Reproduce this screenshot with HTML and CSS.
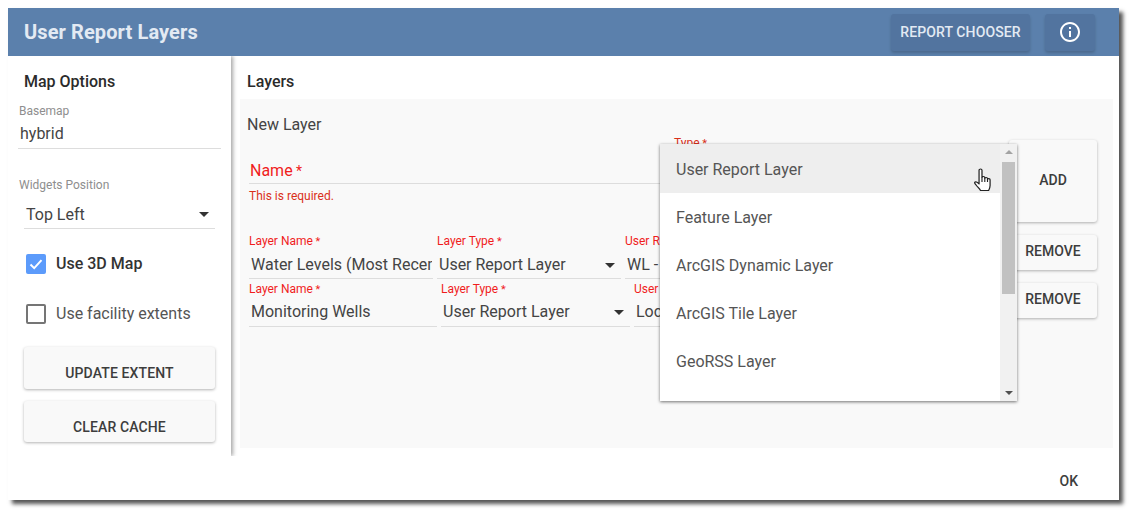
FILE: index.html
```html
<!DOCTYPE html>
<html lang="en">
<head>
<meta charset="utf-8">
<title>User Report Layers</title>
<link rel="stylesheet" href="styles.css">
</head>
<body>
<div class="dialog">
  <header class="topbar">
    <h1 class="title">User Report Layers</h1>
    <button class="top-btn chooser">REPORT CHOOSER</button>
    <button class="top-btn info" aria-label="Info">
      <svg width="24" height="24" viewBox="0 0 24 24"><path fill="#fff" d="M11 7h2v2h-2zm0 4h2v6h-2zm1-9C6.480 2 2 6.480 2 12s4.480 10 10 10 10-4.480 10-10S17.520 2 12 2zm0 18c-4.410 0-8-3.590-8-8s3.590-8 8-8 8 3.590 8 8-3.590 8-8 8z"/></svg>
    </button>
  </header>
  <div class="content">
    <aside class="sidebar">
      <h2 class="heading side-heading">Map Options</h2>
      <div class="side-field basemap">
        <div class="label-grey">Basemap</div>
        <div class="side-value">hybrid</div>
      </div>
      <div class="label-grey widgets-label">Widgets Position</div>
      <div class="side-select">
        <span>Top Left</span><i class="caret"></i>
      </div>
      <label class="check check-on">
        <span class="box box-on"><svg width="20" height="20" viewBox="0 0 20 20"><path d="M4.500 10.500l3.700 3.600 7.300-8" fill="none" stroke="#fff" stroke-width="2"/></svg></span>
        <b>Use 3D Map</b>
      </label>
      <label class="check check-off">
        <span class="box"></span>
        <span>Use facility extents</span>
      </label>
      <button class="card-btn update">UPDATE EXTENT</button>
      <button class="card-btn clear">CLEAR CACHE</button>
    </aside>
    <main class="main">
      <h2 class="heading main-heading">Layers</h2>
      <section class="panel">
        <div class="new-layer">New Layer</div>
        <div class="new-row">
          <div class="new-fields">
            <div class="type-label">Type<span class="ast"> *</span></div>
            <div class="name-field">Name<span class="ast-big"> *</span></div>
            <div class="error">This is required.</div>
          </div>
          <button class="card-btn add">ADD</button>
        </div>
        <div class="layer-row row-a">
          <div class="cells cells-a">
            <div class="cell"><div class="label-red">Layer Name<span class="ast"> *</span></div><div class="value clip">Water Levels (Most Recent)</div></div>
            <div class="cell"><div class="label-red">Layer Type<span class="ast"> *</span></div><div class="value select">User Report Layer<i class="caret"></i></div></div>
            <div class="cell"><div class="label-red">User Report<span class="ast"> *</span></div><div class="value clip">WL - Most Recent</div></div>
          </div>
          <button class="card-btn remove">REMOVE</button>
        </div>
        <div class="layer-row row-b">
          <div class="cells cells-b">
            <div class="cell"><div class="label-red">Layer Name<span class="ast"> *</span></div><div class="value clip">Monitoring Wells</div></div>
            <div class="cell"><div class="label-red">Layer Type<span class="ast"> *</span></div><div class="value select">User Report Layer<i class="caret"></i></div></div>
            <div class="cell"><div class="label-red">User Report<span class="ast"> *</span></div><div class="value clip">Locations</div></div>
          </div>
          <button class="card-btn remove">REMOVE</button>
        </div>
      </section>
    </main>
  </div>
  <footer class="footer"><button class="ok">OK</button></footer>

  <div class="menu">
    <ul class="menu-list">
      <li class="menu-item active">User Report Layer</li>
      <li class="menu-item">Feature Layer</li>
      <li class="menu-item">ArcGIS Dynamic Layer</li>
      <li class="menu-item">ArcGIS Tile Layer</li>
      <li class="menu-item">GeoRSS Layer</li>
    </ul>
    <div class="scrollbar">
      <i class="arrow-up"></i>
      <div class="thumb"></div>
      <i class="arrow-down"></i>
    </div>
  </div>
  <svg class="hand" width="18" height="25" viewBox="0 0 16 25" preserveAspectRatio="none"><path d="M4.500 15.500V2.300c0-1.700 2.600-1.700 2.600 0V9.500c0-1.400 2.500-1.400 2.500 0v1c0-1.400 2.400-1.400 2.400 0v1c0-1.200 2.300-1.200 2.300.3v5.700c0 2-.4 3-1.300 5H5.800c-.7-1.600-2.200-3-3.800-5.200-.7-1-1.700-2-1.400-2.800.5-1.200 2.400-.4 3.900 1.500z" fill="#fff" stroke="#222" stroke-width="1.100" stroke-linejoin="round"/><path d="M7.100 9.500v4.500M9.600 10.500v3.500M12 11.500v2.500" stroke="#222" stroke-width="1" fill="none"/></svg>
</div>
</body>
</html>
```

FILE: styles.css
```css
* { box-sizing: border-box; }
html, body { margin: 0; padding: 0; background: #fff; }
body { padding: 8px; height: 516px; overflow: hidden; font-family: Roboto, "Liberation Sans", sans-serif; color: #444; }
button { font-family: inherit; border: 0; cursor: pointer; }

.dialog { position: relative; width: 1111px; height: 492px; background: #fff; display: flex; flex-direction: column; box-shadow: 4px 4px 4px #555; }

.topbar { height: 48px; flex: none; background: #5b80ac; display: flex; align-items: center; padding: 0 24px 0 16px; }
.title { margin: 0; flex: 1; font-size: 20px; font-weight: 700; color: #e3eaf3; letter-spacing: .1px; }
.top-btn { height: 37px; background: #52749f; color: #e3eaf3; border-radius: 3px; font-size: 14px; font-weight: 500; box-shadow: 0 2px 3px rgba(0,0,0,.18); display: flex; align-items: center; justify-content: center; padding: 0; }
.chooser { width: 139px; margin-right: 15px; letter-spacing: .1px; }
.info { width: 50px; }

.content { height: 400px; flex: none; display: flex; }
.sidebar { width: 223px; flex: none; padding: 0 16px; box-shadow: 2px 0 4px rgba(0,0,0,.35); clip-path: inset(0 -8px 0 0); position: relative; z-index: 1; }
.heading { margin: 0; font-size: 16px; font-weight: 500; line-height: 20px; color: #2b2b2b; }
.side-heading { padding-top: 16px; }

.label-grey { font-size: 12px; line-height: 14px; color: #8e8e8e; }
.basemap { margin: 12px -6px 0 -6px; padding-bottom: 4px; border-bottom: 1px solid #ddd; width: 203px; }
.basemap .label-grey { padding-left: 1px; }
.side-value { font-size: 16px; line-height: 20px; color: #444; padding: 6px 0 0 2px; }
.widgets-label { margin: 29px 0 0 -5px; }
.side-select { margin-top: 10px; width: 191px; height: 27px; padding: 3px 2px 0; border-bottom: 1px solid #ddd; font-size: 16px; line-height: 20px; display: flex; align-items: flex-start; justify-content: space-between; color: #444; }
.caret { flex: none; width: 0; height: 0; border: 5px solid transparent; border-top-color: #333; border-bottom-width: 0; margin: 7px 4px 0 0; }

.check { display: flex; align-items: center; gap: 10px; font-size: 16px; line-height: 20px; padding-left: 2px; color: #555; }
.check b { font-weight: 500; color: #333; }
.check-on { margin-top: 25px; }
.check-off { margin-top: 30px; }
.box { width: 20px; height: 20px; border: 2px solid #757575; border-radius: 2px; flex: none; }
.box-on { border: 0; background: #5c9bfb; }

.card-btn { display: block; background: #f9f9f9; color: #3d3d3d; font-size: 14px; font-weight: 500; border-radius: 3px; box-shadow: 0 1px 3px rgba(0,0,0,.3); padding: 0; }
.update, .clear { width: 191px; padding-top: 9px; letter-spacing: .12px; }
.update { height: 42px; margin-top: 23px; }
.clear { height: 41px; margin-top: 12px; padding-top: 10px; }

.main { flex: 1; padding: 16px 6px 8px 9px; min-width: 0; display: flex; flex-direction: column; }
.main-heading { padding-left: 7px; margin-bottom: 7px; }
.panel { flex: 1; background: #f9f9f9; padding: 16px 16px 0 9px; }
.new-layer { font-size: 16px; line-height: 18px; color: #444; height: 24px; padding-top: 1px; margin-left: -2px; }

.new-row { display: flex; height: 82px; margin-top: 1px; }
.new-fields { flex: 1; position: relative; }
.type-label { position: absolute; left: 425px; top: -3px; font-size: 12px; line-height: 12px; color: #d9301a; }
.name-field { height: 44px; border-bottom: 1px solid #ddd; margin-right: 60px; padding: 21px 0 0 1px; font-size: 16px; line-height: 20px; color: #f01d1d; }
.ast-big { font-size: 14px; }
.error { font-size: 12px; line-height: 14px; color: #d9301a; margin-top: 5px; }
.add { width: 88px; height: 82px; flex: none; padding-bottom: 3px; }

.layer-row { display: flex; position: relative; }
.row-a { margin-top: 12px; height: 48px; }
.row-b { height: 48px; }
.cells { flex: 1; display: grid; min-width: 0; margin-right: 1px; }
.cells-a { grid-template-columns: 184px 184px 1fr; column-gap: 4px; }
.cells-a .clip { margin-right: 1px; }
.cells-b { grid-template-columns: 188px 189px 1fr; column-gap: 4px; }
.cell { min-width: 0; height: 45px; border-bottom: 1px solid #ddd; }
.label-red { font-size: 12px; line-height: 14px; color: #f01d1d; }
.ast { font-size: 11px; }
.value { font-size: 16px; line-height: 20px; color: #444; padding: 6px 0 0 2px; white-space: nowrap; }
.cells-b .value { padding-top: 5px; }
.clip { overflow: hidden; }
.select { display: flex; justify-content: space-between; }
.select .caret { margin: 8px 6px 0 0; }
.remove { width: 88px; height: 35px; flex: none; margin-top: 1px; padding-bottom: 3px; }

.footer { flex: 1; display: flex; align-items: center; justify-content: flex-end; padding: 6px 41px 0 0; }
.ok { background: none; font-size: 14px; font-weight: 500; color: #3d3d3d; padding: 0; }

.menu { position: absolute; left: 652px; top: 136px; width: 357px; height: 257px; background: #fff; display: flex; box-shadow: 0 1px 3px rgba(0,0,0,.55); z-index: 5; }
.menu-list { list-style: none; margin: 0; padding: 1px 0 0; flex: 1; }
.menu-item { height: 48px; line-height: 50px; padding-left: 16px; font-size: 16px; color: #555; }
.menu-item.active { background: #eee; box-shadow: 0 -1px 0 #eee; }
.scrollbar { width: 17px; flex: none; background: #f1f1f1; position: relative; }
.thumb { position: absolute; left: 2px; top: 18px; width: 13px; height: 132px; background: #c1c1c1; }
.arrow-up, .arrow-down { position: absolute; left: 5px; width: 0; height: 0; border: 4px solid transparent; }
.arrow-up { top: 6px; border-top: 0; border-bottom: 4px solid #a3a3a3; }
.arrow-down { bottom: 6px; border-bottom: 0; border-top: 4px solid #505050; }

.hand { position: absolute; left: 966px; top: 160px; z-index: 6; }
```
